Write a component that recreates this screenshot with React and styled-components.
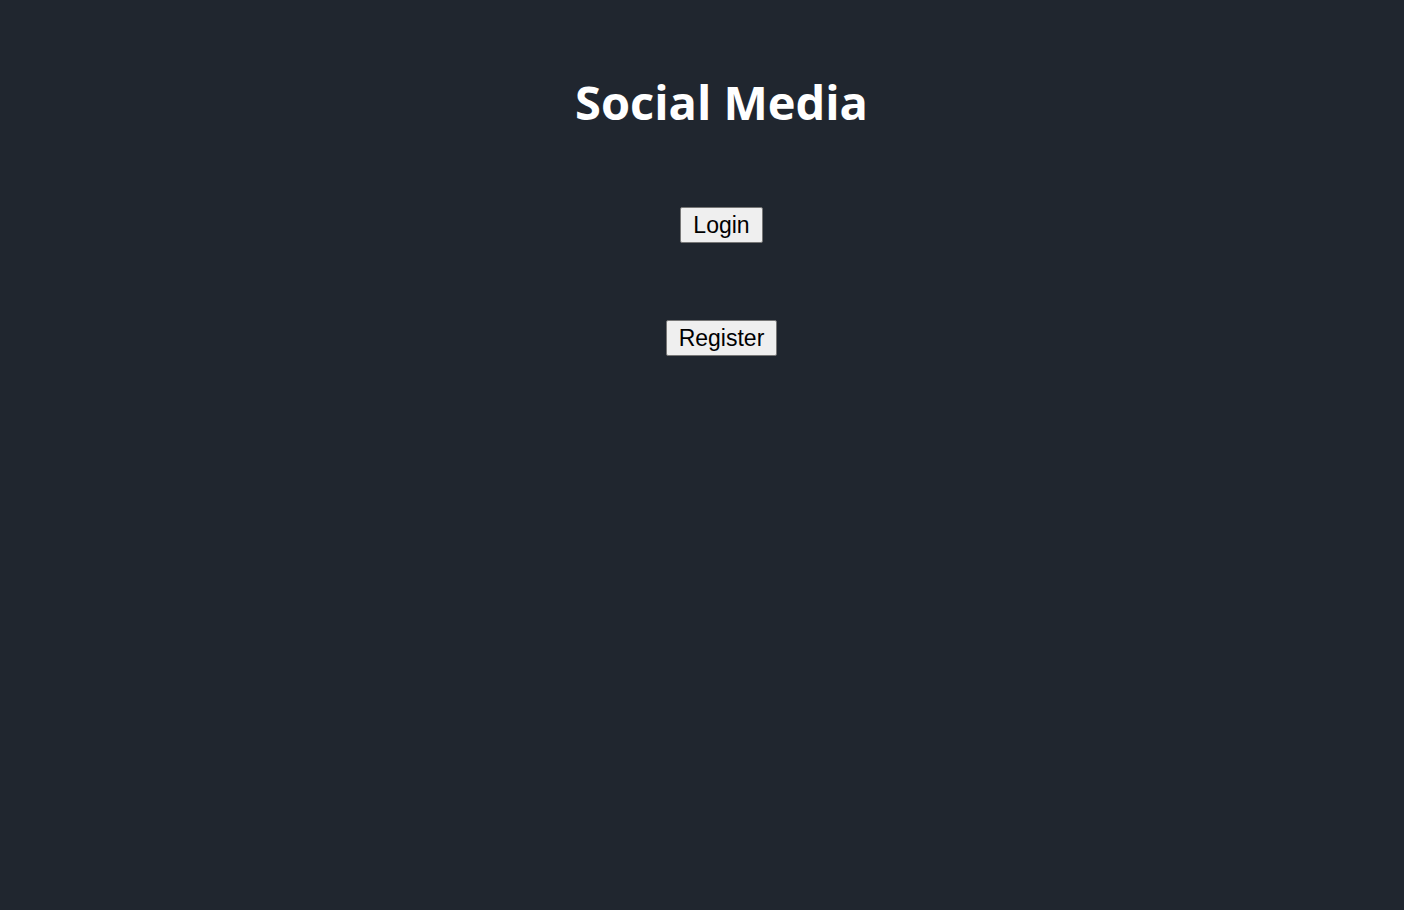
import React from "react"
import styled, { createGlobalStyle } from "styled-components"

const GlobalStyle = createGlobalStyle`
  html, body {
    margin: 0;
    padding: 0;
    background: #20262f;
  }
  body {
    font-family: "Liberation Sans", Arial, sans-serif;
  }
`

const App = () => {
  return (
    <>
      <GlobalStyle />
      <HomeWrapper>
        <h1 className="title">Social Media</h1>
        <div className="actions">
          <Button>Login</Button>
          <Button>Register</Button>
        </div>
      </HomeWrapper>
    </>
  )
}

const HomeWrapper = styled.main`
  & {
    min-height: 910px;
    padding-left: 39px;
    display: flex;
    flex-direction: column;
    align-items: center;
  }
  & .title{
    margin: 70px 0 0;
    font-family: "Open Sans", "Noto Sans CJK KR", sans-serif;
    font-weight: 700;
    font-size: 47px;
    line-height: 64px;
    color: #ffffff;
  }
  & .actions{
    margin-top: 73px;
    display: flex;
    flex-direction: column;
    align-items: center;
    gap: 77px;
  }
`

const Button = styled.button`
  font-family: "Liberation Sans", Arial, sans-serif;
  font-size: 23px;
  line-height: 25px;
  color: #000;
  background: #efefef;
  border: 1px solid #767676;
  border-radius: 2px;
  padding: 5px 12px 4px;
  cursor: pointer;
  &:hover{
    background: #e5e5e5;
  }
`

export default App
